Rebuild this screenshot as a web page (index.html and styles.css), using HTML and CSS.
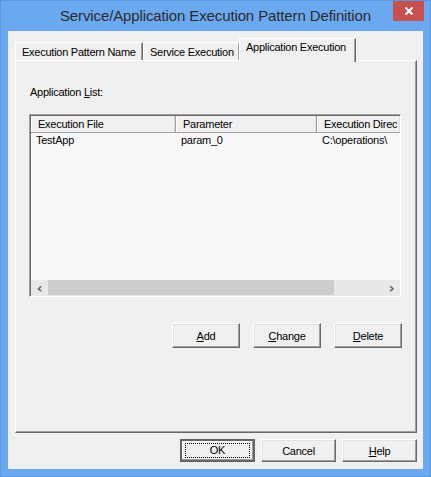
FILE: index.html
```html
<!DOCTYPE html>
<html lang="en">
<head>
    <meta charset="UTF-8">
    <meta name="viewport" content="width=device-width, initial-scale=1.0">
    <title>Service/Application Execution Pattern Definition</title>
    <link rel="stylesheet" href="styles.css">
</head>
<body>
    <div class="window">
        <div class="titlebar">
            <span></span>
            <h1 class="title">Service/Application Execution Pattern Definition</h1>
            <button class="close" aria-label="Close">
                <svg width="10" height="10" viewBox="0 0 10 10">
                    <path d="M1.5 1.5 L8.5 8.5 M8.5 1.5 L1.5 8.5" stroke="#fff" stroke-width="2" fill="none"/>
                </svg>
            </button>
        </div>

        <div class="client">
            <div class="tabs">
                <div class="tab tab-name">Execution Pattern Name</div>
                <div class="tab tab-service">Service Execution</div>
                <div class="tab tab-app active">Application Execution</div>
            </div>

            <div class="panel">
                <div class="list-label">Application <u>L</u>ist:</div>

                <div class="listview">
                    <div class="list-header">
                        <div class="col col-file">Execution File</div>
                        <div class="col col-param">Parameter</div>
                        <div class="col col-dir">Execution Direc</div>
                    </div>
                    <div class="list-rows">
                        <div class="list-row">
                            <div class="col col-file">TestApp</div>
                            <div class="col col-param">param_0</div>
                            <div class="col col-dir">C:\operations\</div>
                        </div>
                    </div>
                    <div class="hscroll">
                        <span class="arrow">&#8249;</span>
                        <div class="track">
                            <div class="thumb"></div>
                        </div>
                        <span class="arrow">&#8250;</span>
                    </div>
                </div>

                <div class="list-buttons">
                    <button class="btn"><u>A</u>dd</button>
                    <button class="btn"><u>C</u>hange</button>
                    <button class="btn"><u>D</u>elete</button>
                </div>
            </div>

            <div class="footer">
                <button class="btn btn-wide btn-default"><span class="focus">OK</span></button>
                <button class="btn btn-wide">Cancel</button>
                <button class="btn btn-wide"><u>H</u>elp</button>
            </div>
        </div>
    </div>
</body>
</html>
```

FILE: styles.css
```css
body {
    margin: 0;
    font-family: "Liberation Sans", Arial, sans-serif;
    font-size: 11px;
    letter-spacing: -0.25px;
    color: #000;
}
.window {
    width: 431px;
    height: 477px;
    box-sizing: border-box;
    background-color: #6aa8f0;
    border: 1px solid #5a98e0;
}
.titlebar {
    height: 30px;
    display: grid;
    grid-template-columns: 1fr auto 1fr;
    align-items: start;
}
.title {
    margin: 0;
    padding-top: 6px;
    font-size: 15px;
    font-weight: normal;
    letter-spacing: -0.12px;
    color: #2b2b2b;
    white-space: nowrap;
}
.close {
    justify-self: end;
    width: 31px;
    height: 20px;
    margin-right: 6px;
    padding: 0;
    border: none;
    background-color: #c75050;
    display: flex;
    align-items: center;
    justify-content: center;
}
.client {
    margin: 0 7px;
    height: 438px;
    box-sizing: border-box;
    padding: 7px 0 0 7px;
    background-color: #f0f0f0;
}
.tabs {
    display: flex;
    align-items: flex-end;
    height: 22px;
}
.tab {
    box-sizing: border-box;
    height: 18px;
    padding: 3px 0 0 6px;
    background-color: #f0f0f0;
    border-top: 1px solid #fff;
    border-left: 1px solid #fff;
    border-right: 1px solid #696969;
    box-shadow: inset -1px 0 #a0a0a0;
    white-space: nowrap;
}
.tab-name { width: 128px; }
.tab-service { width: 97px; }
.tab-app {
    width: 117px;
    margin-left: -1px;
}
.tab.active {
    height: 24px;
    margin-bottom: -2px;
    padding-top: 2px;
    position: relative;
    z-index: 1;
}
.panel {
    width: 402px;
    height: 373px;
    box-sizing: border-box;
    border-top: 1px solid #fff;
    border-left: 1px solid #fff;
    border-right: 1px solid #696969;
    border-bottom: 1px solid #696969;
    box-shadow: inset -1px -1px #a0a0a0;
}
.list-label {
    margin: 25px 0 0 14px;
    height: 13px;
}
.listview {
    margin: 15px 0 0 13px;
    width: 372px;
    height: 183px;
    box-sizing: border-box;
    display: flex;
    flex-direction: column;
    background-color: #f8f8f8;
    border-top: 1px solid #a0a0a0;
    border-left: 1px solid #a0a0a0;
    border-right: 1px solid #fff;
    border-bottom: 1px solid #fff;
    box-shadow: inset 1px 1px #696969;
    overflow: hidden;
}
.list-header {
    display: flex;
    height: 16px;
    margin: 1px 0 0 1px;
    background-color: #f0f0f0;
    border-bottom: 1px solid #a0a0a0;
}
.list-header .col {
    box-sizing: border-box;
    padding: 2px 0 0 6px;
    border-left: 1px solid #fff;
    border-right: 1px solid #a0a0a0;
    box-shadow: inset -1px 0 #dcdcdc;
}
.col {
    flex: none;
    white-space: nowrap;
    overflow: hidden;
}
.col-file { width: 145px; }
.col-param { width: 141px; }
.col-dir { width: 84px; }
.list-rows {
    flex: 1;
    margin-left: 1px;
}
.list-row {
    display: flex;
    height: 15px;
    padding-top: 1px;
}
.list-row .col {
    box-sizing: border-box;
    padding-left: 5px;
}
.hscroll {
    display: flex;
    align-items: center;
    height: 16px;
    margin-left: 1px;
    background-color: #e8e8e8;
}
.arrow {
    width: 17px;
    text-align: center;
    font-family: "DejaVu Sans", sans-serif;
    font-size: 14px;
    font-weight: bold;
    color: #606060;
    line-height: 16px;
}
.track {
    flex: 1;
    height: 16px;
}
.thumb {
    width: 286px;
    height: 15px;
    background-color: #cdcdcd;
}
.list-buttons {
    display: flex;
    justify-content: flex-end;
    gap: 13px;
    margin-top: 26px;
    padding-right: 14px;
}
.btn {
    width: 68px;
    height: 25px;
    padding: 0;
    font-family: "Liberation Sans", Arial, sans-serif;
    font-size: 11px;
    letter-spacing: -0.25px;
    color: #000;
    background-color: #f0f0f0;
    border: 1px solid;
    border-color: #fff #696969 #696969 #fff;
    box-shadow: inset -1px -1px #a0a0a0, inset 1px 1px #e3e3e3;
}
.footer {
    display: flex;
    justify-content: flex-end;
    gap: 6px;
    margin-top: 6px;
    padding-right: 6px;
}
.btn-wide {
    width: 75px;
    height: 23px;
}
.btn-default {
    border: 2px solid #646464;
    box-shadow: inset -1px -1px #a0a0a0, inset 1px 1px #fff;
}
.focus {
    display: block;
    margin: 2px 3px;
    height: 13px;
    line-height: 13px;
    border: 1px dotted #000;
}
```
